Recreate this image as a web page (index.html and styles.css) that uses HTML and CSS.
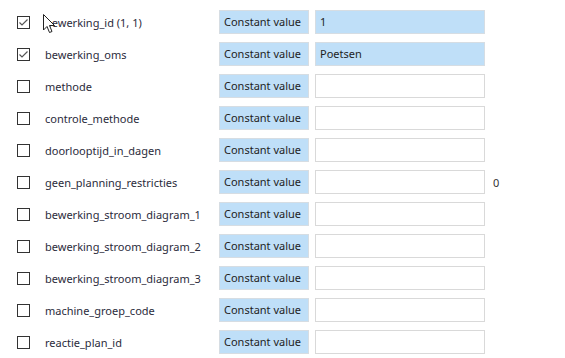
FILE: index.html
```html
<!DOCTYPE html>
<html lang="en">
<head>
    <meta charset="UTF-8">
    <title>Mapping</title>
    <link rel="stylesheet" href="styles.css">
</head>
<body>

<div class="rows">
    <div class="row">
        <span class="check checked"><svg viewBox="0 0 11 11"><path d="M1.5 5.5 L4 8 L9.5 2.5"/></svg></span>
        <span class="name">bewerking_id (1, 1)</span>
        <span class="mode">Constant value</span>
        <span class="value filled">1</span>
    </div>
    <div class="row">
        <span class="check checked"><svg viewBox="0 0 11 11"><path d="M1.5 5.5 L4 8 L9.5 2.5"/></svg></span>
        <span class="name">bewerking_oms</span>
        <span class="mode">Constant value</span>
        <span class="value filled">Poetsen</span>
    </div>
    <div class="row">
        <span class="check"></span>
        <span class="name">methode</span>
        <span class="mode">Constant value</span>
        <span class="value"></span>
    </div>
    <div class="row">
        <span class="check"></span>
        <span class="name">controle_methode</span>
        <span class="mode">Constant value</span>
        <span class="value"></span>
    </div>
    <div class="row">
        <span class="check"></span>
        <span class="name">doorlooptijd_in_dagen</span>
        <span class="mode">Constant value</span>
        <span class="value"></span>
    </div>
    <div class="row">
        <span class="check"></span>
        <span class="name">geen_planning_restricties</span>
        <span class="mode">Constant value</span>
        <span class="value"></span>
        <span class="extra">0</span>
    </div>
    <div class="row">
        <span class="check"></span>
        <span class="name">bewerking_stroom_diagram_1</span>
        <span class="mode">Constant value</span>
        <span class="value"></span>
    </div>
    <div class="row">
        <span class="check"></span>
        <span class="name">bewerking_stroom_diagram_2</span>
        <span class="mode">Constant value</span>
        <span class="value"></span>
    </div>
    <div class="row">
        <span class="check"></span>
        <span class="name">bewerking_stroom_diagram_3</span>
        <span class="mode">Constant value</span>
        <span class="value"></span>
    </div>
    <div class="row">
        <span class="check"></span>
        <span class="name">machine_groep_code</span>
        <span class="mode">Constant value</span>
        <span class="value"></span>
    </div>
    <div class="row">
        <span class="check"></span>
        <span class="name">reactie_plan_id</span>
        <span class="mode">Constant value</span>
        <span class="value"></span>
    </div>
</div>

<!-- mouse pointer -->
<svg class="cursor" viewBox="0 0 13 20">
    <path d="M0.5 0.5 L0.5 16 L4 12.5 L6.5 18.5 L9 17.5 L6.5 11.5 L11.5 11.5 Z"/>
</svg>

</body>
</html>
```

FILE: styles.css
```css
body {
    margin: 0;
    background: white;
    font-family: "Noto Sans", "Open Sans", sans-serif;
    font-size: 11px;
    color: #2b2b3b;
}

.rows {
    display: flex;
    flex-direction: column;
    gap: 8px;
    padding-top: 10px;
}

.row {
    display: flex;
    align-items: center;
    height: 24px;
    white-space: nowrap;
}

.check {
    width: 11px;
    height: 11px;
    border: 1px solid #333;
    margin-left: 17px;
    margin-right: 15px;
    flex: none;
}

.check svg {
    display: block;
    width: 11px;
    height: 11px;
}

.check path {
    fill: none;
    stroke: #555;
    stroke-width: 1.2;
}

.name {
    width: 174px;
    flex: none;
}

.mode {
    width: 90px;
    height: 24px;
    box-sizing: border-box;
    background: #bfdff8;
    border: 1px solid #d6dde3;
    padding-left: 4px;
    line-height: 22px;
    color: #1e1e1e;
    flex: none;
}

.value {
    width: 170px;
    height: 24px;
    box-sizing: border-box;
    margin-left: 6px;
    border: 1px solid #d9d9d9;
    padding-left: 4px;
    line-height: 22px;
    color: #1e1e1e;
    flex: none;
}

.value.filled {
    background: #bfdff8;
    border-color: #d6dde3;
}

.extra {
    margin-left: 8px;
    color: #333;
}

.cursor {
    position: absolute;
    left: 43px;
    top: 14px;
    width: 13px;
    height: 20px;
}

.cursor path {
    fill: white;
    stroke: #222;
    stroke-width: 1;
}
```
